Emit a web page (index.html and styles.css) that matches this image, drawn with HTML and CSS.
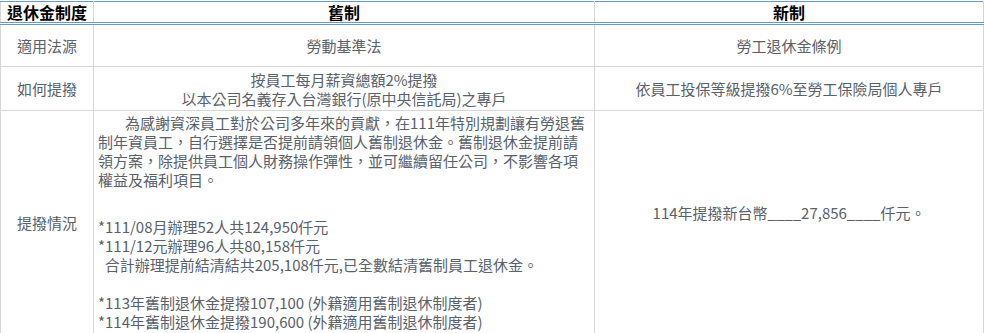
FILE: index.html
```html
<!DOCTYPE html>
<html lang="zh-Hant">
<head>
<meta charset="utf-8">
<link rel="stylesheet" href="styles.css">
</head>
<body>
<table class="pension">
  <colgroup>
    <col class="c1">
    <col class="c2">
    <col class="c3">
  </colgroup>
  <thead>
    <tr>
      <th>退休金制度</th>
      <th>舊制</th>
      <th>新制</th>
    </tr>
  </thead>
  <tbody>
    <tr class="r1">
      <td>適用法源</td>
      <td>勞動基準法</td>
      <td>勞工退休金條例</td>
    </tr>
    <tr class="r2">
      <td>如何提撥</td>
      <td>按員工每月薪資總額2%提撥<br>以本公司名義存入台灣銀行(原中央信託局)之專戶</td>
      <td>依員工投保等級提撥6%至勞工保險局個人專戶</td>
    </tr>
    <tr class="r3">
      <td>提撥情況</td>
      <td class="detail">
        <p class="para intro">為感謝資深員工對於公司多年來的貢獻，在111年特別規劃讓有勞退舊<br>制年資員工，自行選擇是否提前請領個人舊制退休金。舊制退休金提前請<br>領方案，除提供員工個人財務操作彈性，並可繼續留任公司，不影響各項<br>權益及福利項目。</p>
        <p class="para">*111/08月辦理52人共124,950仟元<br>*111/12元辦理96人共80,158仟元<br>&nbsp;&nbsp;合計辦理提前結清結共205,108仟元,已全數結清舊制員工退休金。<br>&nbsp;<br>*113年舊制退休金提撥107,100 (外籍適用舊制退休制度者)<br>*114年舊制退休金提撥190,600 (外籍適用舊制退休制度者)</p>
      </td>
      <td>114年提撥新台幣____27,856____仟元。<br>&nbsp;</td>
    </tr>
  </tbody>
</table>
</body>
</html>
```

FILE: styles.css
```css
html, body {
  margin: 0;
  padding: 0;
  background: #ffffff;
}

body {
  font-family: "Noto Sans CJK TC", "Noto Sans", sans-serif;
}

.pension {
  border-collapse: collapse;
  table-layout: fixed;
  width: 983px;
  margin-top: 1px;
}

.c1 { width: 93px; }
.c2 { width: 501px; }
.c3 { width: 389px; }

.pension th {
  font-size: 16px;
  font-weight: bold;
  color: #000000;
  line-height: 20px;
  height: 20px;
  padding: 0 4px;
  text-align: center;
  border-top: 1px solid #6f97c4;
  border-bottom: 3px double #6f97c4;
  border-left: 1px solid #d6d6d6;
  border-right: 1px solid #d6d6d6;
}

.pension td {
  font-size: 15px;
  color: #59616b;
  line-height: 19px;
  padding: 2px 4px;
  text-align: center;
  vertical-align: middle;
  border: 1px solid #d6d6d6;
}

.r1 td { height: 37px; }
.r2 td { height: 39px; }

.pension td.detail {
  text-align: left;
  vertical-align: top;
  white-space: nowrap;
}

.para {
  margin: 0;
}

.intro {
  text-indent: 27px;
}

.para + .para {
  margin-top: 28px;
}
```
